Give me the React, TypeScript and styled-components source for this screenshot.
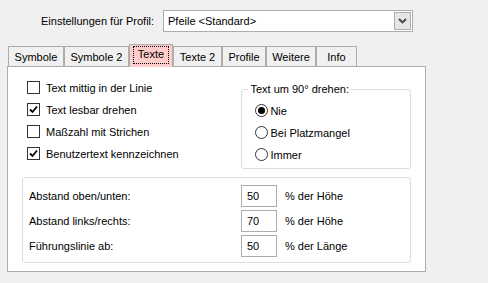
import React from "react";
import styled, { createGlobalStyle } from "styled-components";

const GlobalStyle = createGlobalStyle`
  html, body {
    margin: 0;
    padding: 0;
    background: #f0f0f0;
  }
  body {
    font-family: "Liberation Sans", Arial, sans-serif;
    font-size: 11px;
    color: #000;
  }
`;

// Fenster
const Window = styled.div`
  width: 488px;
  height: 283px;
  background: #f0f0f0;
  display: flex;
  flex-direction: column;
  overflow: hidden;
`;

// Kopfzeile mit Profilauswahl
const HeaderRow = styled.div`
  display: flex;
  align-items: center;
  padding: 10px 0 0 41px;
  height: 22px;
`;

const HeaderLabel = styled.span`
  width: 122px;
`;

const Combo = styled.div`
  width: 248px;
  height: 20px;
  border: 1px solid #adadad;
  background: #fff;
  display: flex;
  align-items: center;
`;

const ComboText = styled.span`
  flex: 1;
  padding-left: 4px;
`;

const ComboButton = styled.div`
  width: 15px;
  height: 16px;
  margin-right: 1px;
  border: 1px solid #acacac;
  background: #e5e5e5;
  display: flex;
  align-items: center;
  justify-content: center;
`;

// Reiter
const TabRow = styled.div`
  display: flex;
  align-items: flex-end;
  height: 22px;
  margin: 12px 0 0 8px;
  position: relative;
  z-index: 2;
`;

const Tab = styled.div<{ $w: number; $active?: boolean }>`
  box-sizing: border-box;
  width: ${(p) => p.$w}px;
  height: ${(p) => (p.$active ? 23 : 20)}px;
  margin-bottom: ${(p) => (p.$active ? -1 : 0)}px;
  border: 1px solid #adadad;
  border-bottom: none;
  background: ${(p) => (p.$active ? "#ffcccc" : "#f0f0f0")};
  display: flex;
  align-items: center;
  justify-content: center;
  padding-bottom: ${(p) => (p.$active ? 3 : 0)}px;
`;

const Focus = styled.span`
  border: 1px dotted #000;
  padding: 1px 4px 2px;
  line-height: 13px;
`;

const Panel = styled.div`
  box-sizing: border-box;
  width: 419px;
  height: 206px;
  margin-left: 7px;
  border: 1px solid #adadad;
  background: #fff;
  padding: 0 14px 8px 14px;
  display: flex;
  flex-direction: column;
  gap: 8px;
`;

const TopSection = styled.div`
  display: flex;
  align-items: flex-start;
`;

const CheckColumn = styled.div`
  width: 215px;
  margin: 14px 0 0 5px;
  display: flex;
  flex-direction: column;
  gap: 9px;
`;

const OptionRow = styled.label<{ $gap: number }>`
  display: flex;
  align-items: center;
  gap: ${(p) => p.$gap}px;
  height: 13px;
  white-space: nowrap;
`;

const CheckBox = styled.span`
  box-sizing: border-box;
  width: 13px;
  height: 13px;
  border: 1px solid #333;
  background: #fff;
  display: flex;
  align-items: center;
  justify-content: center;
`;

const Radio = styled.span`
  box-sizing: border-box;
  width: 13px;
  height: 13px;
  border: 1px solid #333;
  border-radius: 50%;
  display: flex;
  align-items: center;
  justify-content: center;
`;

const RadioDot = styled.span`
  width: 7px;
  height: 7px;
  border-radius: 50%;
  background: #000;
`;

const GroupBox = styled.div`
  position: relative;
  box-sizing: border-box;
  border: 1px solid #d5dfe5;
  border-radius: 3px;
`;

const RotateGroup = styled(GroupBox)`
  width: 170px;
  height: 80px;
  margin-top: 22px;
  padding: 14px 0 0 13px;
  display: flex;
  flex-direction: column;
  gap: 9px;
`;

const GroupTitle = styled.span`
  position: absolute;
  top: -8px;
  left: 6px;
  padding: 0 2px;
  background: #fff;
  line-height: 14px;
`;

const SpacingGroup = styled(GroupBox)`
  width: 389px;
  height: 86px;
  padding: 7px 0 0 6px;
  display: flex;
  flex-direction: column;
  gap: 3px;
`;

const SpacingRow = styled.div`
  display: flex;
  align-items: center;
  height: 22px;
`;

const SpacingLabel = styled.span`
  width: 212px;
`;

const NumberBox = styled.div`
  box-sizing: border-box;
  width: 36px;
  height: 22px;
  border: 1px solid #adadad;
  padding-left: 5px;
  display: flex;
  align-items: center;
`;

const Unit = styled.span`
  margin-left: 8px;
`;

const tabs = [
  { name: "Symbole", w: 56 },
  { name: "Symbole 2", w: 65 },
  { name: "Texte", w: 44, active: true },
  { name: "Texte 2", w: 49 },
  { name: "Profile", w: 44 },
  { name: "Weitere", w: 50 },
  { name: "Info", w: 41 },
];

const checks = [
  { text: "Text mittig in der Linie", on: false },
  { text: "Text lesbar drehen", on: true },
  { text: "Maßzahl mit Strichen", on: false },
  { text: "Benutzertext kennzeichnen", on: true },
];

const radios = [
  { text: "Nie", on: true },
  { text: "Bei Platzmangel", on: false },
  { text: "Immer", on: false },
];

const spacing = [
  { label: "Abstand oben/unten:", value: "50", unit: "% der Höhe" },
  { label: "Abstand links/rechts:", value: "70", unit: "% der Höhe" },
  { label: "Führungslinie ab:", value: "50", unit: "% der Länge" },
];

const Check = () => (
  <svg width="9" height="9" viewBox="0 0 9 9">
    <path d="M1 4.5 L3.5 7 L8 1.5" fill="none" stroke="#000" strokeWidth="1.8" />
  </svg>
);

const Chevron = () => (
  <svg width="9" height="6" viewBox="0 0 9 6">
    <path d="M1 1 L4.5 4.5 L8 1" fill="none" stroke="#444" strokeWidth="1.8" />
  </svg>
);

const App: React.FC = () => {
  return (
    <Window>
      <GlobalStyle />
      <HeaderRow>
        <HeaderLabel>Einstellungen für Profil:</HeaderLabel>
        <Combo>
          <ComboText>Pfeile &lt;Standard&gt;</ComboText>
          <ComboButton>
            <Chevron />
          </ComboButton>
        </Combo>
      </HeaderRow>

      <TabRow>
        {tabs.map((t) => (
          <Tab key={t.name} $w={t.w} $active={t.active}>
            {t.active ? <Focus>{t.name}</Focus> : t.name}
          </Tab>
        ))}
      </TabRow>

      <Panel>
        <TopSection>
          <CheckColumn>
            {checks.map((c) => (
              <OptionRow key={c.text} $gap={6}>
                <CheckBox>{c.on && <Check />}</CheckBox>
                {c.text}
              </OptionRow>
            ))}
          </CheckColumn>
          <RotateGroup>
            <GroupTitle>Text um 90° drehen:</GroupTitle>
            {radios.map((r) => (
              <OptionRow key={r.text} $gap={2}>
                <Radio>{r.on && <RadioDot />}</Radio>
                {r.text}
              </OptionRow>
            ))}
          </RotateGroup>
        </TopSection>

        <SpacingGroup>
          {spacing.map((s) => (
            <SpacingRow key={s.label}>
              <SpacingLabel>{s.label}</SpacingLabel>
              <NumberBox>{s.value}</NumberBox>
              <Unit>{s.unit}</Unit>
            </SpacingRow>
          ))}
        </SpacingGroup>
      </Panel>
    </Window>
  );
};

export default App;
